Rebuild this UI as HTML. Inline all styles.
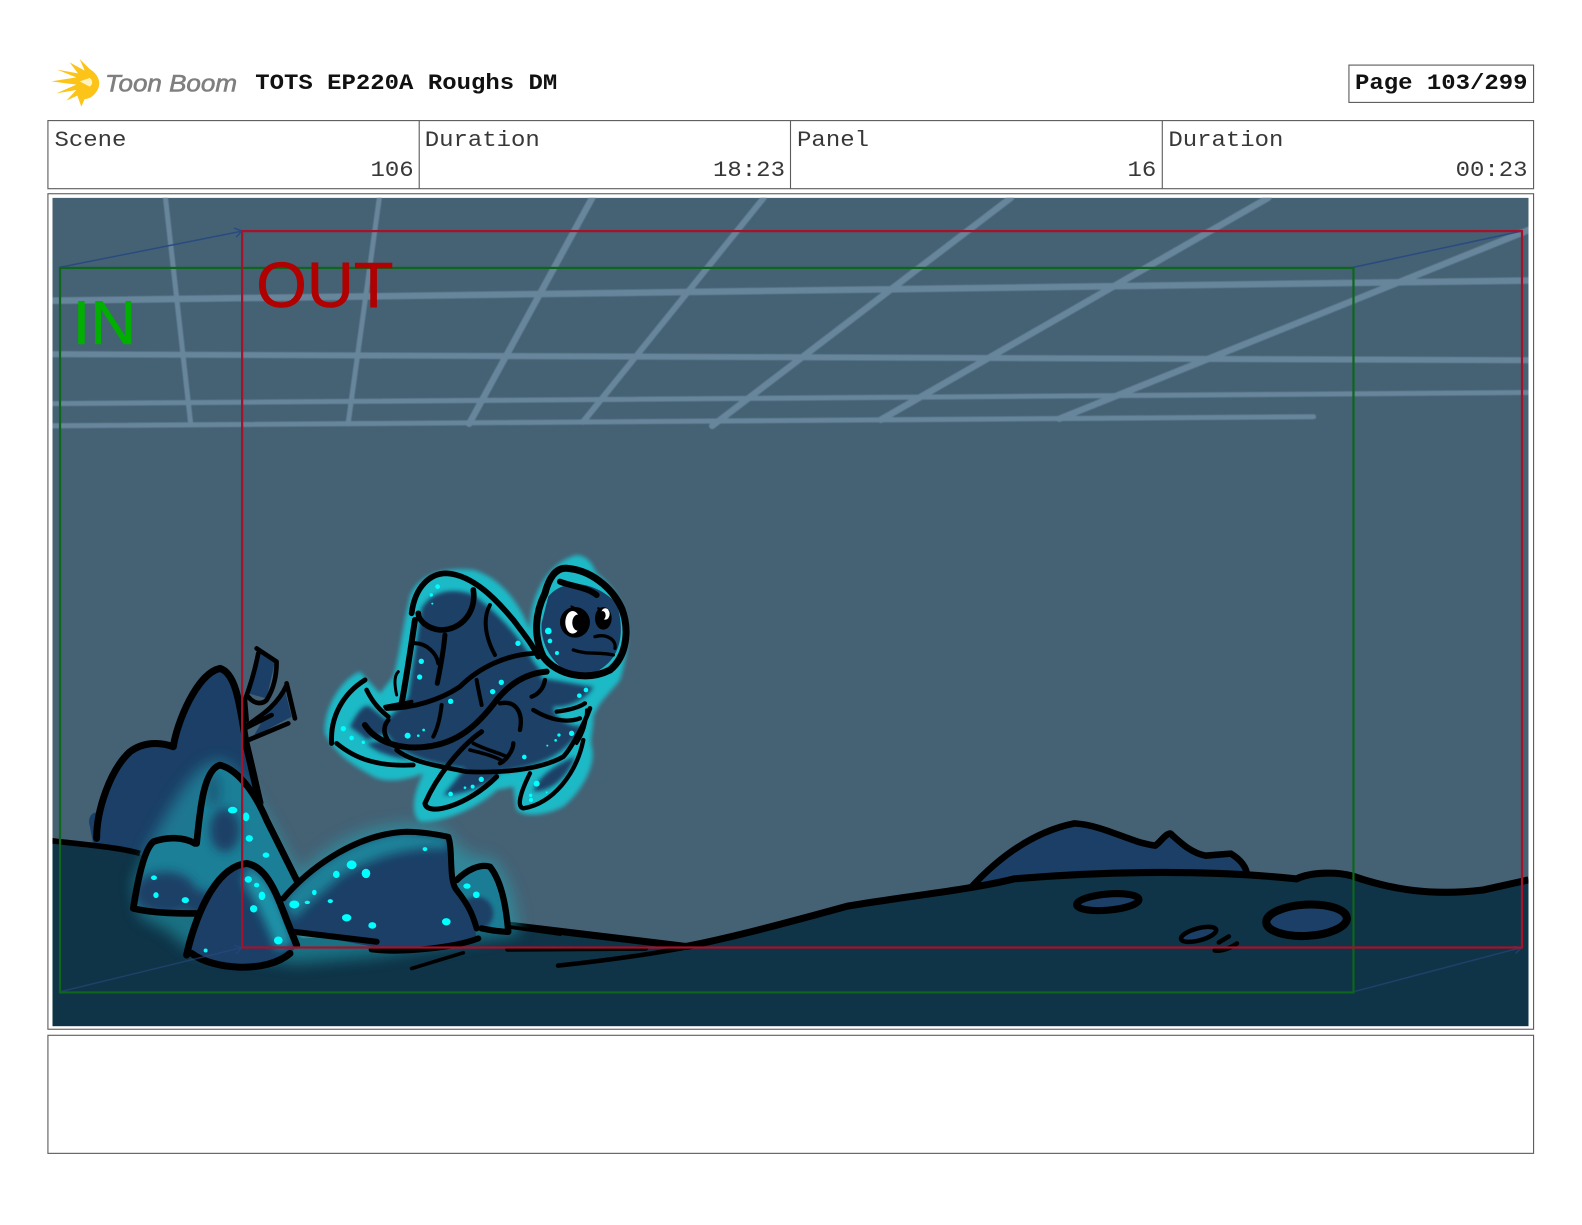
<!DOCTYPE html>
<html><head><meta charset="utf-8"><title>Storyboard</title>
<style>html,body{margin:0;padding:0;background:#fff}svg{display:block}</style></head>
<body>
<svg xmlns="http://www.w3.org/2000/svg" width="1582" height="1225" viewBox="0 0 1582 1225">
<defs>
<filter id="b05" x="-5%" y="-5%" width="110%" height="110%"><feGaussianBlur stdDeviation=".5"/></filter>
<filter id="b6" x="-30%" y="-30%" width="160%" height="160%"><feGaussianBlur stdDeviation="6"/></filter>
<filter id="b15" x="-40%" y="-40%" width="180%" height="180%"><feGaussianBlur stdDeviation="15"/></filter>
<filter id="b22" x="-40%" y="-40%" width="180%" height="180%"><feGaussianBlur stdDeviation="22"/></filter>
<clipPath id="img"><rect x="52" y="196" width="1463" height="821"/></clipPath>
<clipPath id="rMid"><path d="M470,640 C480,540 490,420 540,405 C600,420 650,500 680,570 L770,750 L740,870 L470,850 L280,835 C290,770 310,660 340,635 C380,620 430,620 465,640Z"/></clipPath>
<clipPath id="rFront"><path d="M440,975 C460,880 520,710 620,700 C680,710 710,790 740,870 L770,945 C740,1000 680,1025 600,1022 C530,1020 480,1000 440,975Z"/></clipPath>
<clipPath id="rBig"><path d="M730,805 C820,700 960,610 1100,605 C1150,605 1200,615 1225,620 C1240,660 1225,750 1250,780 C1290,830 1300,860 1310,925 C1250,950 1100,970 1000,950 L760,905Z"/></clipPath>
<clipPath id="rSmall"><path d="M1250,750 C1280,720 1320,700 1350,710 C1390,760 1400,850 1405,905 L1310,900 C1300,860 1290,830 1250,780Z"/></clipPath>
</defs>

<g transform="translate(48,54) scale(.3333)">
<path d="M10,82 L85,70 L27,47 L90,58 L65,25 L110,50 L95,15 L125,45 C150,60 160,85 150,105 C140,125 125,135 110,135 L100,158 L88,125 L55,140 L85,108 L25,118 L85,92Z" fill="#fcc419"/>
<path d="M95,82 L125,72 C135,78 135,92 125,98Z" fill="#fff3c0"/>
</g>
<text x="105" y="91.5" font-family="Liberation Sans,sans-serif" font-style="italic" font-size="24.5" fill="#7f7f7f" stroke="#7f7f7f" stroke-width=".6" textLength="132" lengthAdjust="spacingAndGlyphs">Toon Boom</text>

<g transform="scale(1.00893,1.00906)">
<g fill="none" stroke="#5c5c5c" stroke-width="1.1">
<rect x="1337" y="64.5" width="183" height="37"/>
<rect x="47.5" y="119.5" width="1472.5" height="67.5"/>
<path d="M415.5,119.5V187M783.5,119.5V187M1152,119.5V187"/>
<rect x="47.5" y="192" width="1472.5" height="828"/>
<rect x="47.5" y="1026" width="1472.5" height="117"/>
</g>

<g font-family="Liberation Mono,monospace" font-size="22" fill="#383838">
<text transform="translate(253,88.2) scale(1.08,1)" font-weight="bold" fill="#111">TOTS EP220A Roughs DM</text>
<text transform="translate(1343,88.2) scale(1.08,1)" font-weight="bold" fill="#111">Page 103/299</text>
<text transform="translate(54,144.5) scale(1.08,1)">Scene</text>
<text transform="translate(421,144.5) scale(1.08,1)">Duration</text>
<text transform="translate(790,144.5) scale(1.08,1)">Panel</text>
<text transform="translate(1158,144.5) scale(1.08,1)">Duration</text>
<text transform="translate(410,174.5) scale(1.08,1)" text-anchor="end">106</text>
<text transform="translate(778,174.5) scale(1.08,1)" text-anchor="end">18:23</text>
<text transform="translate(1146,174.5) scale(1.08,1)" text-anchor="end">16</text>
<text transform="translate(1514,174.5) scale(1.08,1)" text-anchor="end">00:23</text>
</g>

<g clip-path="url(#img)">
<rect x="52" y="196" width="1463" height="821" fill="#456174"/>
<g fill="none" stroke="#67869b" stroke-linecap="round" filter="url(#b05)">
<path stroke-width="5" d="M164,196L189,420"/>
<path stroke-width="5" d="M376,196L345,420"/>
<path stroke-width="6.5" d="M587,196L465,420"/>
<path stroke-width="6" d="M757,196L578,418"/>
<path stroke-width="6.5" d="M1002,196L706,422"/>
<path stroke-width="6.5" d="M1257,196L873,416"/>
<path stroke-width="6.5" d="M1515,228L1050,415"/>
<path stroke-width="6.5" d="M52,298L1515,278"/>
<path stroke-width="6" d="M52,351L1515,357"/>
<path stroke-width="5" d="M52,400L1515,389"/>
<path stroke-width="5" d="M52,422L1302,413"/>
</g>

<path d="M962,880 C985,855 1020,825 1065,816 C1095,818 1120,835 1145,838 C1150,835 1155,826 1160,826 C1170,835 1180,845 1195,848 L1220,846 C1230,852 1236,860 1236,875Z" fill="#1b3f66"/>
<path d="M962,880 C985,855 1020,825 1065,816 C1095,818 1120,835 1145,838 C1150,835 1155,826 1160,826 C1170,835 1180,845 1195,848 L1220,846 C1230,852 1236,860 1236,868" fill="none" stroke="#000" stroke-width="6.5" stroke-linejoin="round"/>

<g transform="translate(39.6,624.4) scale(.3304)">
<path d="M150,590 C140,560 160,540 180,550 C190,440 240,360 300,340 L400,350 C410,280 470,130 540,115 C590,130 600,230 620,350 L660,520 L500,700 L170,700Z" fill="#1b3f66"/>
<path d="M170,625 C170,540 210,420 270,365 C310,335 360,335 400,350 C410,280 470,130 540,115 C590,130 600,230 620,350 C640,430 650,480 660,520" fill="none" stroke="#000" stroke-width="21" stroke-linejoin="round" stroke-linecap="round"/>
</g>

<path d="M52,832 C90,834 120,842 150,850 L300,930 L505,917 L680,938 C720,930 760,920 840,898 C900,888 960,882 1005,871 C1100,863 1200,862 1285,871 C1300,864 1325,864 1340,868 C1380,882 1420,888 1470,882 L1515,872 V1017 H52Z" fill="#0f3347"/>
<path d="M505,917 L680,938 C720,930 760,920 840,898 C900,888 960,882 1005,871 C1100,863 1200,862 1285,871 C1300,864 1325,864 1340,868 C1380,882 1420,888 1470,882 L1515,872" fill="none" stroke="#000" stroke-width="7" stroke-linejoin="round"/>
<g fill="#1b3f66" stroke="#000">
<ellipse cx="1098" cy="894" rx="31" ry="8" transform="rotate(-5 1098 894)" stroke-width="7"/>
<ellipse cx="1188" cy="926" rx="18" ry="6" transform="rotate(-15 1188 926)" stroke-width="4.5"/>
<ellipse cx="1295" cy="912" rx="40" ry="15.5" transform="rotate(-3 1295 912)" stroke-width="8"/>
</g>
<path d="M1204,942 C1212,943 1220,939 1226,935 M1208,934 L1218,928" fill="none" stroke="#000" stroke-width="4.5" stroke-linecap="round"/>
<path d="M503,941 L640,940 M553,957 C600,952 650,945 690,937" fill="none" stroke="#000" stroke-width="4.5" stroke-linecap="round"/>

<g transform="translate(39.6,624.4) scale(.3304)">
<path d="M36,632 C100,640 230,650 300,670" fill="none" stroke="#000" stroke-width="17"/>
<path d="M330,640 C400,520 480,360 560,400 C650,480 700,600 780,730 C900,600 1050,560 1200,590 C1250,620 1260,690 1350,680 C1420,740 1430,840 1440,910 L1000,980 L770,1000 L450,960 L380,900 L300,860 L280,760Z" fill="#20a5b5" filter="url(#b22)" opacity=".55"/>

<path d="M650,60 L705,95 L680,205 L625,190Z M735,180 L755,260 L640,320 L680,250Z" fill="#1b3f66"/>
<path d="M650,55 L710,95 C710,130 705,170 680,210 C665,225 640,220 625,200 M655,70 C645,120 630,170 615,210 L620,270 M740,160 L765,265 M740,165 C715,220 675,250 615,290 M625,330 L745,280 M615,295 L695,255" fill="none" stroke="#000" stroke-width="14" stroke-linecap="round" stroke-linejoin="round"/>
<path d="M618,340 C640,430 650,480 660,520" fill="none" stroke="#000" stroke-width="22"/>

<g clip-path="url(#rMid)">
<rect x="260" y="390" width="540" height="480" fill="#1b7f97"/>
<g fill="#1b3f66" filter="url(#b15)">
<ellipse cx="375" cy="790" rx="95" ry="65"/>
<ellipse cx="555" cy="600" rx="45" ry="65"/>
<ellipse cx="480" cy="820" rx="50" ry="40"/>
<ellipse cx="520" cy="480" rx="25" ry="50" opacity=".5"/>
</g>
</g>
<path d="M470,640 C480,540 490,420 540,405 C600,420 650,500 680,570 L770,750 M465,640 C430,620 380,620 340,635 C310,660 290,770 280,835 C340,850 420,850 470,850" fill="none" stroke="#000" stroke-width="20" stroke-linecap="round" stroke-linejoin="round"/>

<g clip-path="url(#rSmall)"><rect x="1240" y="690" width="180" height="230" fill="#1b7d95"/><ellipse cx="1310" cy="850" rx="50" ry="50" fill="#1b3f66" filter="url(#b6)"/></g>
<g clip-path="url(#rBig)">
<rect x="720" y="590" width="600" height="380" fill="#1b3f66"/>
<path d="M730,810 C820,700 960,610 1100,605 L1230,620 L1225,655 C1100,650 1000,680 900,740 C850,790 800,820 760,870Z" fill="#1b8299" filter="url(#b15)"/>
</g>
<g clip-path="url(#rFront)">
<rect x="430" y="690" width="350" height="340" fill="#1b3f66"/>
<path d="M620,710 C680,720 720,800 760,940 L710,960 C670,860 640,800 610,760Z" fill="#1d93a8" filter="url(#b15)"/>
</g>
<path d="M1250,750 C1280,720 1320,700 1350,710 C1390,760 1400,850 1405,905 M1325,895 C1350,900 1380,905 1405,905" fill="none" stroke="#000" stroke-width="19" stroke-linecap="round"/>
<path d="M730,805 C820,700 960,610 1100,605 C1150,605 1200,615 1225,620 C1240,660 1225,750 1250,780 C1290,830 1300,860 1310,895" fill="none" stroke="#000" stroke-width="18" stroke-linecap="round" stroke-linejoin="round"/>
<path d="M760,905 L1010,935 M995,958 C1100,970 1250,950 1315,925" fill="none" stroke="#000" stroke-width="18" stroke-linecap="round"/>
<path d="M440,975 C460,880 520,710 620,700 C680,710 710,790 740,870 L770,945 M455,970 C520,1020 680,1030 750,970" fill="none" stroke="#000" stroke-width="21" stroke-linecap="round" stroke-linejoin="round"/>
<path d="M1115,1015 L1270,968 M1405,890 L1560,912" fill="none" stroke="#000" stroke-width="11" stroke-linecap="round"/>

<g fill="#00ffff">
<ellipse cx="578" cy="540" rx="14" ry="10"/><ellipse cx="618" cy="560" rx="10" ry="13"/><ellipse cx="628" cy="625" rx="11" ry="10"/><ellipse cx="678" cy="675" rx="10" ry="8"/>
<ellipse cx="342" cy="743" rx="9" ry="7"/><ellipse cx="348" cy="795" rx="8" ry="9"/><ellipse cx="436" cy="810" rx="11" ry="9"/>
<ellipse cx="625" cy="748" rx="11" ry="10"/><ellipse cx="650" cy="765" rx="8" ry="7"/><ellipse cx="666" cy="797" rx="10" ry="13"/><ellipse cx="641" cy="836" rx="11" ry="11"/><ellipse cx="715" cy="931" rx="13" ry="12"/><circle cx="497" cy="961" r="6"/>
<ellipse cx="935" cy="704" rx="15" ry="13"/><ellipse cx="978" cy="730" rx="13" ry="14"/><ellipse cx="889" cy="733" rx="10" ry="11"/><ellipse cx="823" cy="787" rx="7" ry="8"/><ellipse cx="802" cy="817" rx="8" ry="5"/><ellipse cx="871" cy="813" rx="8" ry="6"/><ellipse cx="763" cy="823" rx="15" ry="12"/><ellipse cx="920" cy="863" rx="14" ry="11"/><ellipse cx="997" cy="886" rx="12" ry="10"/><ellipse cx="1155" cy="657" rx="7" ry="6"/><ellipse cx="1219" cy="875" rx="13" ry="11"/><ellipse cx="1281" cy="768" rx="11" ry="8"/><ellipse cx="1309" cy="794" rx="10" ry="10"/>
</g>
</g>

<g transform="translate(297.3,525.2) scale(.3304)">
<path d="M330,200 C350,140 420,110 520,120 C590,140 650,200 690,300 C690,200 740,100 830,75 C870,80 880,110 890,130 C990,210 1000,320 960,450 C930,490 900,510 880,560 C880,600 870,620 875,650 C890,700 850,780 790,830 C730,860 670,860 650,840 L640,770 L590,780 C540,830 430,880 360,875 C330,850 340,790 370,730 C320,750 260,760 220,740 C170,710 110,680 75,610 C70,540 120,450 180,425 L240,490 L280,440 C300,370 310,280 330,200Z" fill="#1fb9c6" filter="url(#b6)"/>
<g fill="#1b3f66" filter="url(#b6)">
<path d="M365,235 C400,175 470,175 520,195 C590,245 660,320 700,395 C720,420 730,430 720,445 C780,450 860,470 880,470 C860,510 800,535 760,530 C760,560 800,590 850,590 C800,660 760,700 610,725 C450,720 300,690 260,610 L200,630 C180,610 160,600 150,590 C170,550 190,520 210,530 L260,570 C290,540 310,530 325,500Z"/>
<path d="M430,795 C470,750 500,700 540,680 L600,730 C560,770 490,795 430,795Z"/>
<path d="M700,785 C710,750 750,710 825,680 C810,730 760,785 700,785Z"/>
<path d="M260,630 L330,690 C260,680 220,660 200,640Z"/>
</g>
<path d="M745,200 C790,145 880,150 950,220 C980,320 960,410 850,440 C770,430 720,350 725,280Z" fill="#1b3f66"/>

<g fill="none" stroke="#000" stroke-linecap="round" stroke-linejoin="round">
<path stroke-width="17" d="M335,250 C345,170 390,130 440,130 C520,135 590,210 640,270 C670,310 695,340 715,380"/>
<path stroke-width="17" d="M520,180 C530,240 490,300 420,300 C380,295 355,270 355,250"/>
<path stroke-width="18" d="M345,270 C330,370 320,440 305,520"/>
<path stroke-width="15" d="M435,315 C430,370 420,420 412,460"/>
<path stroke-width="12" d="M345,340 C380,340 410,370 415,400"/>
<path stroke-width="12" d="M570,225 C545,270 560,330 585,375"/>
<path stroke-width="15" d="M260,535 C340,535 420,510 480,470 C540,410 620,375 700,370"/>
<path stroke-width="18" d="M195,585 C230,640 310,660 380,650 C470,640 530,590 590,510 C630,460 680,430 740,425"/>
<path stroke-width="14" d="M265,570 C240,600 260,640 290,650"/>
<path stroke-width="12" d="M530,450 C535,480 540,500 545,525"/>
<path stroke-width="12" d="M425,525 C420,570 410,600 400,620"/>
<path stroke-width="15" d="M195,450 C130,490 90,560 95,640"/>
<path stroke-width="14" d="M110,640 C170,690 240,710 340,705"/>
<path stroke-width="14" d="M200,480 C220,520 240,540 265,560"/>
<path stroke-width="14" d="M290,660 C340,700 430,710 500,725 C600,730 720,720 790,680 C810,660 850,590 870,535"/>
<path stroke-width="15" d="M545,605 C480,650 410,740 375,820 C380,860 500,830 590,740"/>
<path stroke-width="11" d="M520,640 C560,660 600,670 620,680 M510,660 C550,670 590,680 610,695"/>
<path stroke-width="13" d="M600,520 C650,510 670,550 660,600 M640,640 C640,660 620,690 600,700"/>
<path stroke-width="13" d="M850,630 C830,730 760,820 670,835 C650,830 660,790 690,730"/>
<path stroke-width="9" d="M295,425 C280,440 285,470 290,495"/>
<path stroke-width="11" d="M255,530 L335,515"/>
<path stroke-width="21" d="M735,190 C705,250 700,320 730,380 C770,435 860,455 930,420 C980,380 990,300 965,235 C935,170 870,120 800,115 C765,112 745,150 735,190Z"/>
<path stroke-width="18" d="M780,155 C820,170 860,172 890,195"/>
<path stroke-width="13" d="M700,540 C750,570 800,580 840,565 M770,545 C810,540 840,530 855,520 M735,450 C730,480 710,495 695,500"/>
<path stroke-width="10" d="M860,540 C860,580 850,610 830,640"/>
<path stroke-width="10" d="M885,320 C920,310 950,330 945,355 M820,360 C860,375 900,365 940,375"/>
<path stroke-width="7" d="M815,230 L835,240 M895,235 L905,240"/>
</g>
<ellipse cx="825" cy="277" rx="45" ry="46" fill="#000"/>
<ellipse cx="818" cy="277" rx="22" ry="34" fill="#fff"/>
<ellipse cx="833" cy="278" rx="16" ry="24" fill="#000"/>
<ellipse cx="910" cy="265" rx="25" ry="34" fill="#000"/>
<ellipse cx="916" cy="252" rx="13" ry="17" fill="#fff"/>
<ellipse cx="908" cy="256" rx="9" ry="13" fill="#000"/>
<g fill="#00ffff">
<circle cx="745" cy="303" r="10"/><circle cx="750" cy="333" r="7"/><circle cx="771" cy="369" r="6"/><circle cx="654" cy="340" r="8"/><circle cx="413" cy="170" r="7"/><circle cx="394" cy="195" r="5"/><circle cx="397" cy="221" r="3"/>
<circle cx="364" cy="394" r="8"/><circle cx="359" cy="441" r="8"/><circle cx="604" cy="457" r="8"/><circle cx="578" cy="485" r="8"/><circle cx="452" cy="514" r="8"/><circle cx="323" cy="617" r="9"/><circle cx="355" cy="617" r="4"/><circle cx="371" cy="600" r="4"/>
<circle cx="130" cy="596" r="8"/><circle cx="155" cy="624" r="7"/><circle cx="190" cy="637" r="5"/><circle cx="673" cy="681" r="7"/><circle cx="815" cy="610" r="8"/><circle cx="777" cy="615" r="5"/><circle cx="767" cy="631" r="4"/><circle cx="742" cy="647" r="3"/><circle cx="838" cy="497" r="7"/><circle cx="858" cy="480" r="7"/>
<circle cx="452" cy="792" r="7"/><circle cx="495" cy="773" r="4"/><circle cx="518" cy="770" r="6"/><circle cx="544" cy="748" r="8"/><circle cx="710" cy="761" r="9"/><circle cx="692" cy="796" r="5"/><circle cx="693" cy="810" r="6"/><circle cx="740" cy="787" r="3"/>
</g>
</g>

<g fill="none" stroke="#2a4a80" stroke-width="1.5">
<path d="M59,265L240,229M232,226L240,229L234,235M1341,265L1508,229"/>
<path opacity=".6" d="M59,983L240,939M232,937L240,939L234,945M1341,983L1508,939M1500,938L1508,939L1502,945"/>
</g>
<rect x="59.5" y="265.5" width="1282" height="718" fill="none" stroke="#0e661c" stroke-width="2.2"/>
<rect x="240" y="229" width="1268.5" height="710" fill="none" stroke="#a5122a" stroke-width="2.2"/>
<text x="72" y="341" font-family="Liberation Sans,sans-serif" font-size="62" fill="#00b000" stroke="#00b000" stroke-width=".6" textLength="63" lengthAdjust="spacingAndGlyphs">IN</text>
<text x="254" y="304" font-family="Liberation Sans,sans-serif" font-size="63" fill="#b00000" stroke="#b00000" stroke-width=".6" textLength="136" lengthAdjust="spacingAndGlyphs">OUT</text>
</g>
</g>
</svg>
</body></html>
